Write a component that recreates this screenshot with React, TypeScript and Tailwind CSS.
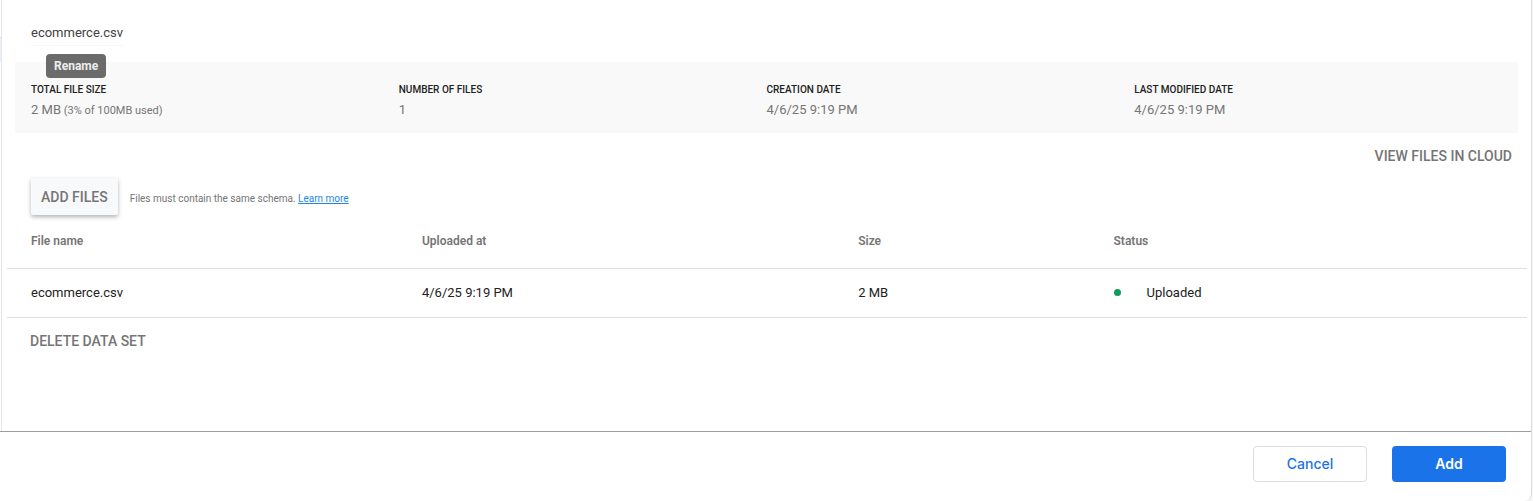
const summary = [
  { label: "TOTAL FILE SIZE", value: "2 MB", note: "(3% of 100MB used)" },
  { label: "NUMBER OF FILES", value: "1" },
  { label: "CREATION DATE", value: "4/6/25 9:19 PM" },
  { label: "LAST MODIFIED DATE", value: "4/6/25 9:19 PM" },
];

const files = [
  { name: "ecommerce.csv", uploadedAt: "4/6/25 9:19 PM", size: "2 MB", status: "Uploaded" },
];

function NameField() {
  return (
    <div className="relative flex px-4 pt-5">
      <input
        type="text"
        aria-label="Data set name"
        aria-describedby="rename-tip"
        defaultValue="ecommerce.csv"
        className="h-[26px] w-[92px] border-b border-[#f8f8f8] bg-transparent text-[13px] text-[#414141] outline-none"
      />
      <span
        id="rename-tip"
        role="tooltip"
        className="absolute left-[31px] top-[54px] rounded bg-[#6b6b6b] px-2 text-xs leading-6 font-bold text-[#eeeeee]"
      >
        Rename
      </span>
    </div>
  );
}

function Summary() {
  return (
    <dl className="mt-4 grid grid-cols-4 bg-[#f9f9f9] px-4 pt-5 pb-3">
      {summary.map((item) => (
        <div key={item.label}>
          <dt className="text-[10px] leading-4 font-medium text-[#212121]">{item.label}</dt>
          <dd className="mt-[2px] text-[13px] leading-5 text-[#757575]">
            {item.value}
            {item.note && <span className="text-[11px]"> {item.note}</span>}
          </dd>
        </div>
      ))}
    </dl>
  );
}

function FilesTable() {
  return (
    <table className="w-full table-fixed border-collapse text-left">
      <colgroup>
        <col className="w-[27.3%]" />
        <col className="w-[28.7%]" />
        <col className="w-[16.8%]" />
        <col />
      </colgroup>
      <thead>
        <tr className="h-[53px] border-b border-[#e0e0e0] align-top text-xs text-[#757575]">
          <th className="pt-[18px] pl-6 font-semibold">File name</th>
          <th className="pt-[18px] font-semibold">Uploaded at</th>
          <th className="pt-[18px] font-semibold">Size</th>
          <th className="pt-[18px] font-semibold">Status</th>
        </tr>
      </thead>
      <tbody>
        {files.map((file) => (
          <tr key={file.name} className="h-[49px] border-b border-[#e0e0e0] text-[13px] text-[#212121]">
            <td className="pl-6">{file.name}</td>
            <td>{file.uploadedAt}</td>
            <td>{file.size}</td>
            <td>
              <span className="flex items-center gap-[26px]">
                <span className="size-[7px] rounded-full bg-[#0f9d58]" />
                {file.status}
              </span>
            </td>
          </tr>
        ))}
      </tbody>
    </table>
  );
}

export default function App() {
  return (
    <div className="min-h-screen bg-[#f5f5f5] pr-px font-['Roboto',sans-serif]">
      <div className="relative flex min-h-screen flex-col rounded-br-lg border-r border-[#dadce0] bg-white">
        <span className="absolute top-[37px] left-0 h-[25px] w-px border-t border-[#dadce0] bg-[#e8f0fe]" />
        <main className="ml-px grow border-l border-[#e6e6e6] pr-1 pl-[5px]">
          <div className="pr-[9px] pl-2">
            <NameField />
            <Summary />
            <div className="flex justify-end pt-[13px] pr-[6px]">
              <button type="button" className="text-sm font-medium text-[#757575]">
                VIEW FILES IN CLOUD
              </button>
            </div>
            <div className="mt-3 flex items-center gap-3 pl-4">
              <button
                type="button"
                className="h-[37px] rounded-xs bg-[#f8f9fa] px-[10px] text-sm font-medium text-[#757575] shadow-[0_2px_4px_rgba(0,0,0,0.3)]"
              >
                ADD FILES
              </button>
              <p className="pt-1 text-[10px] leading-4 text-[#757575]">
                Files must contain the same schema.{" "}
                <a href="#schema" className="text-[#1e88e5] underline">
                  Learn more
                </a>
              </p>
            </div>
          </div>
          <FilesTable />
          <button type="button" className="mt-[13px] ml-[23px] text-sm font-medium text-[#757575]">
            DELETE DATA SET
          </button>
        </main>
        <footer className="flex justify-end gap-[25px] border-t border-[#9e9e9e] pt-[14px] pr-[25px] pb-[19px] font-['Inter',sans-serif] text-sm">
          <button
            type="button"
            className="h-9 w-[114px] rounded border border-[#dadce0] font-medium text-[#1a73e8]"
          >
            Cancel
          </button>
          <button type="button" className="h-9 w-[114px] rounded bg-[#1a73e8] font-semibold text-white">
            Add
          </button>
        </footer>
      </div>
    </div>
  );
}
